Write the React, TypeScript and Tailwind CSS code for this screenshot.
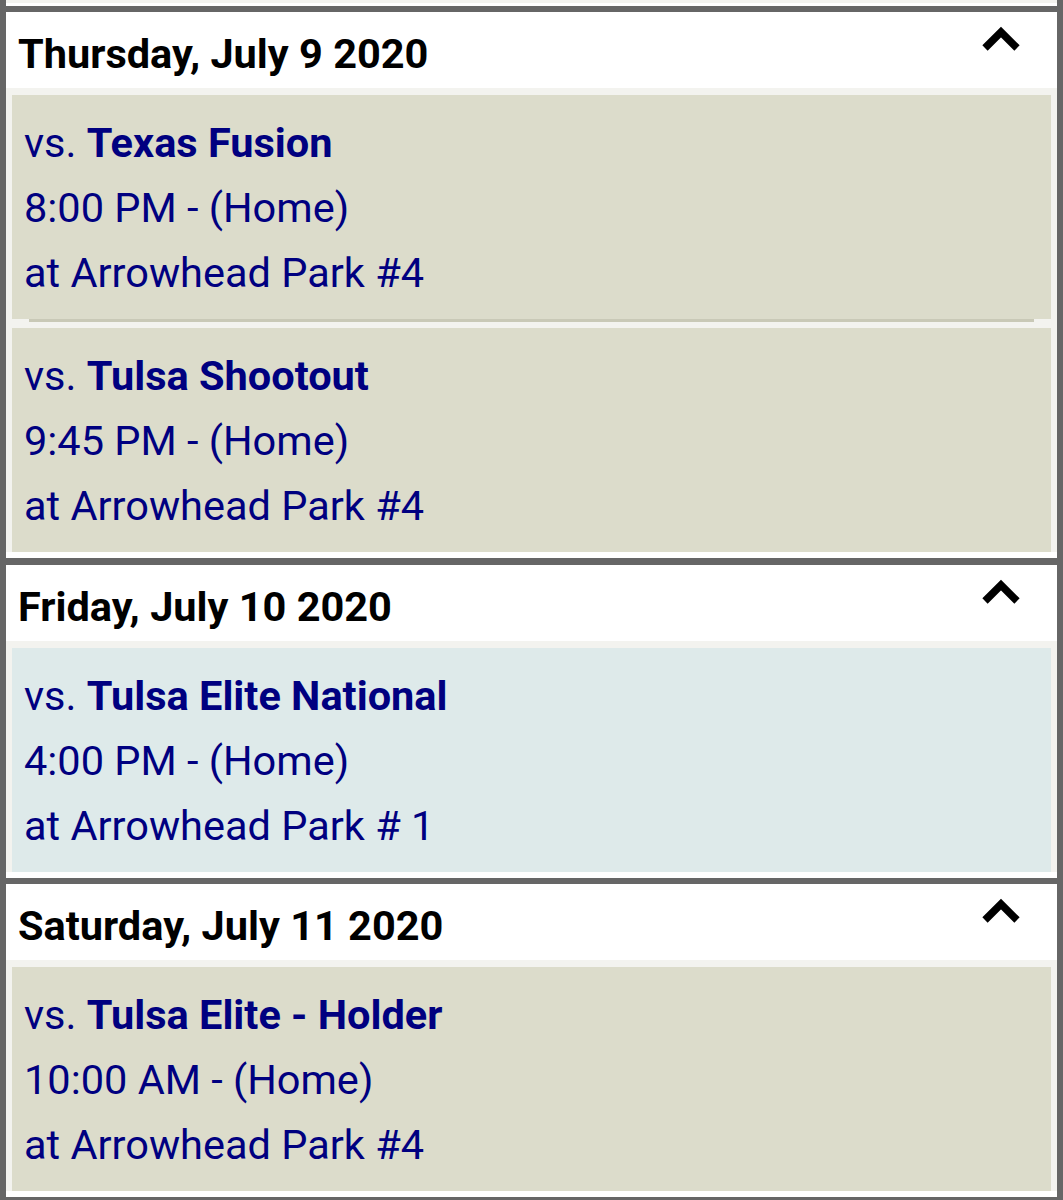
import React from "react";

type Game = {
  opponent: string;
  time: string;
  location: string;
};

type Day = {
  label: string;
  tone: "tan" | "blue";
  games: Game[];
};

const days: Day[] = [
  {
    label: "Thursday, July 9 2020",
    tone: "tan",
    games: [
      { opponent: "Texas Fusion", time: "8:00 PM - (Home)", location: "at Arrowhead Park #4" },
      { opponent: "Tulsa Shootout", time: "9:45 PM - (Home)", location: "at Arrowhead Park #4" }
    ]
  },
  {
    label: "Friday, July 10 2020",
    tone: "blue",
    games: [{ opponent: "Tulsa Elite National", time: "4:00 PM - (Home)", location: "at Arrowhead Park # 1" }]
  },
  {
    label: "Saturday, July 11 2020",
    tone: "tan",
    games: [{ opponent: "Tulsa Elite - Holder", time: "10:00 AM - (Home)", location: "at Arrowhead Park #4" }]
  }
];

function ChevronUp() {
  return (
    <svg width="40" height="28" viewBox="0 0 40 28" className="mt-[13px] block">
      <polyline points="4,23 20,7 36,23" fill="none" stroke="#000" strokeWidth="7.5" strokeLinejoin="miter" />
    </svg>
  );
}

function GameBlock({ game, tone }: { game: Game; tone: Day["tone"] }) {
  return (
    <div className={`${tone === "blue" ? "bg-[#deeaea]" : "bg-[#dcdccb]"} h-[224px] py-[15px] pl-[12px] text-[41.5px] leading-[65px] text-[#000080]`}>
      <div>
        vs. <span className="font-bold">{game.opponent}</span>
      </div>
      <div>{game.time}</div>
      <div>{game.location}</div>
    </div>
  );
}

function DayCard({ day, index }: { day: Day; index: number }) {
  return (
    <div className={`border-x-[6px] border-[#666] ${index === 1 ? "border-t-[7px]" : "border-t-[6px]"} bg-white`}>
      <div className="flex h-[76px] justify-between pl-[12px] pr-[36px]">
        <div className="pt-[22px] text-[41.5px] font-bold leading-[40px] text-black">{day.label}</div>
        <ChevronUp />
      </div>
      <div className="bg-[#f3f3ef] px-[6px] pt-[7px]">
        {day.games.map((game, i) => (
          <div key={i}>
            {i > 0 && (
              <div className="pb-[6px]">
                <div className="mx-[17px] h-[3px] bg-[#c9c9b7]" />
              </div>
            )}
            <GameBlock game={game} tone={day.tone} />
          </div>
        ))}
      </div>
      <div className="h-[6px] bg-white" />
    </div>
  );
}

export default function App() {
  return (
    <div className="min-h-[1200px] bg-[#666] font-['Roboto',sans-serif]">
      <div className="border-x-[6px] border-[#666]">
        <div className="h-[3px] bg-[#f3f3ef]" />
        <div className="h-[3px] bg-white" />
      </div>
      {days.map((day, i) => (
        <DayCard key={day.label} day={day} index={i} />
      ))}
    </div>
  );
}
